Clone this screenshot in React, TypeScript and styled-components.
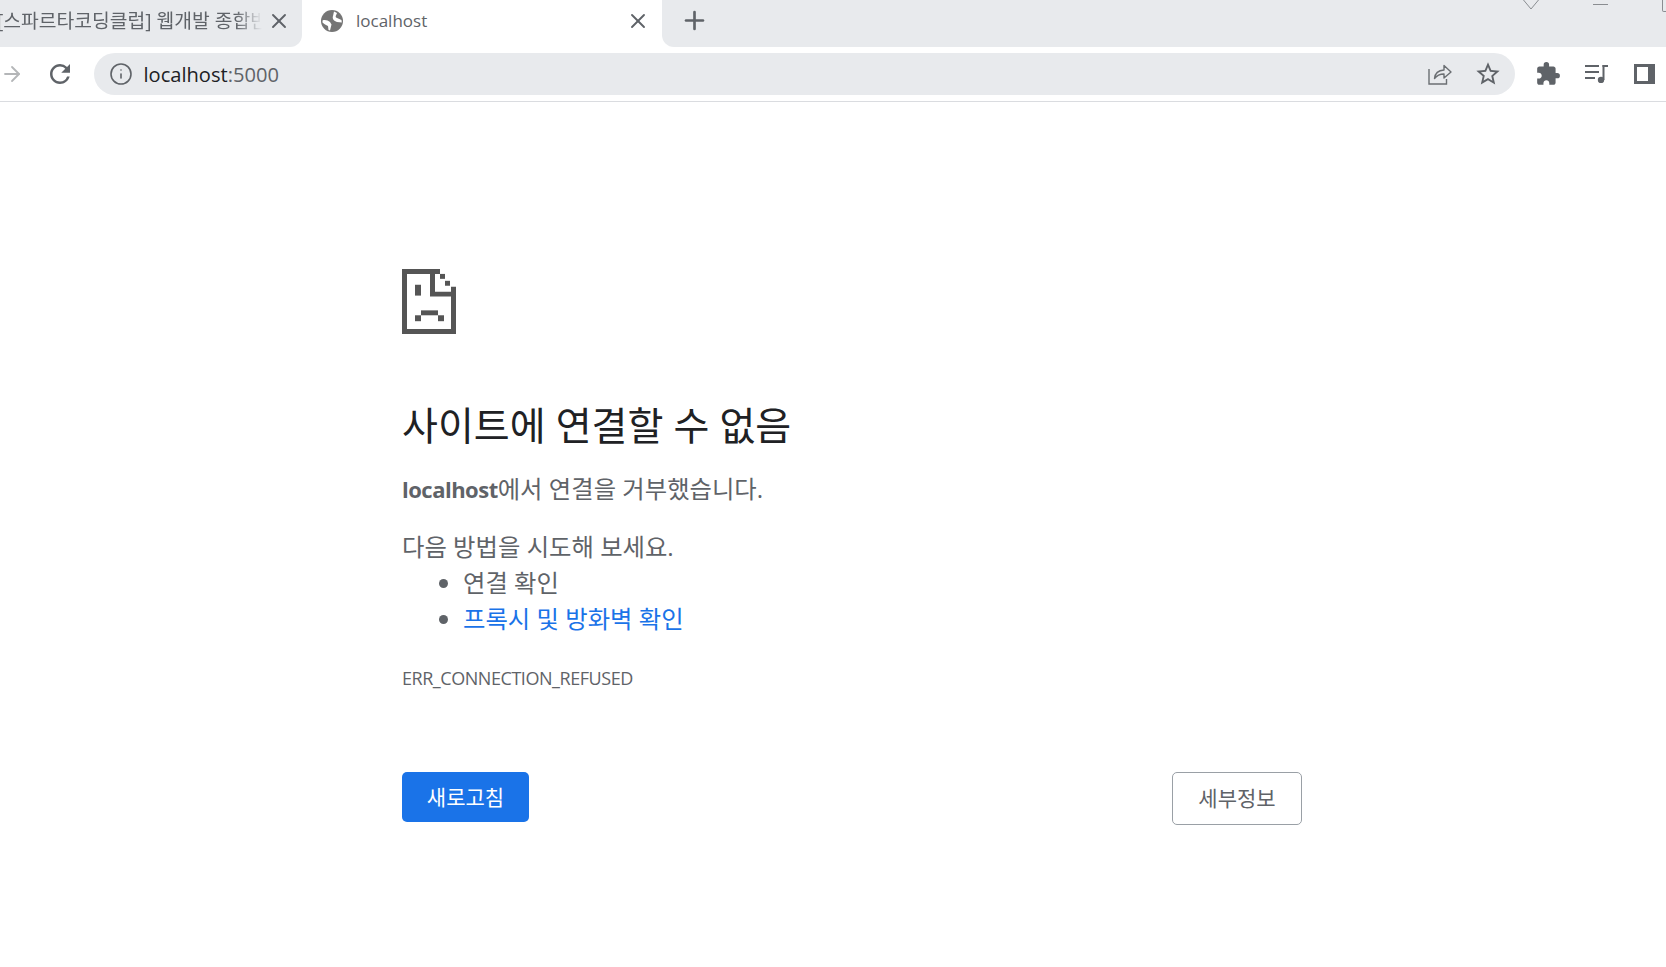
import { FC } from 'react';
import styled, { createGlobalStyle } from 'styled-components';
import { ArrowRight, Info, Plus, X } from 'lucide-react';
import { MdExtension, MdRefresh, MdStarBorder } from 'react-icons/md';

const FONT = '"Open Sans", "Noto Sans CJK KR", sans-serif';

const GlobalStyle = createGlobalStyle`
  html, body {
    margin: 0;
    height: 100%;
    overflow: hidden;
    background: #fff;
    font-family: ${FONT};
  }
`;

const GlobeIcon: FC = () => (
  <svg width="22" height="22" viewBox="0 0 22 22">
    <circle cx="11" cy="11" r="11" fill="#757575" />
    <path
      d="M1.500 10.500C4 9.500 7 10.500 9 12l1.500 2.500L9 20.500 7.500 20 7 16c-2-1-4-2-5.500-3.500zM13 1.500 16 3c-.500 2-2 3-1 4.500l5.500 2.500.300 2.500L16 12c-3-1-5-3-4-6z"
      fill="#fff"
    />
  </svg>
);

const ShareIcon: FC = () => (
  <svg width="24" height="22" viewBox="0 0 24 22" fill="none" stroke="#6b6f73" strokeWidth="1.4">
    <path d="M1 6v15h17.500v-5" />
    <path d="M6.500 15.500c.500-5 4-8.200 9.500-8.500V2.500L23 9l-7 6v-4c-3.500 0-7 1.200-9.500 4.500z" strokeLinejoin="round" />
  </svg>
);

const MediaIcon: FC = () => (
  <svg width="23" height="18" viewBox="0 0 23 18" fill="#5f6368">
    <rect x="0" y="0" width="14" height="2" />
    <rect x="0" y="6" width="14" height="2" />
    <rect x="0" y="12" width="10" height="2" />
    <rect x="17.500" y="0" width="2" height="15" />
    <rect x="17.500" y="0" width="5.500" height="2" />
    <circle cx="16" cy="15" r="3.200" />
  </svg>
);

const PanelIcon: FC = () => (
  <svg width="21" height="20" viewBox="0 0 21 20">
    <rect width="21" height="20" fill="#5f6368" />
    <rect x="3" y="3" width="11" height="14" fill="#fff" />
  </svg>
);

const SadFile: FC = () => (
  <svg width="54" height="65" viewBox="0 0 54 66" preserveAspectRatio="none" fill="#555">
    <path d="M0 0h38v5H33v18h16v-5h5v48H0zM5 5v56h44V28H28V5z" fillRule="evenodd" />
    <rect x="38" y="5" width="5" height="5" />
    <rect x="43" y="12" width="5" height="5" />
    <rect x="13" y="16" width="6" height="11" />
    <rect x="19" y="42" width="17" height="5" />
    <rect x="13" y="47" width="6" height="6" />
    <rect x="36" y="47" width="6" height="6" />
  </svg>
);

const App: FC = () => {
  return (
    <>
      <GlobalStyle />
      <TabStrip>
        <InactiveTab>
          <FadedTitle>[스파르타코딩클럽] 웹개발 종합반</FadedTitle>
          <X size={24} strokeWidth={1.9} color="#5f6368" />
        </InactiveTab>
        <ActiveTab>
          <GlobeIcon />
          <TabTitle>localhost</TabTitle>
          <X size={24} strokeWidth={1.9} color="#5f6368" />
        </ActiveTab>
        <StripFiller>
          <Plus size={29} strokeWidth={2.2} color="#5f6368" />
          <WindowControls>
            <svg width="16" height="10" viewBox="0 0 16 10" fill="none" stroke="#8a8d91">
              <path d="M.5 0 8 9l7.500-9" />
            </svg>
            <MinimizeLine />
            <RestoreBox />
          </WindowControls>
        </StripFiller>
      </TabStrip>

      <Toolbar>
        <IconSlot $width={24}>
          <ArrowRight size={24} strokeWidth={1.8} color="#b4b6b8" />
        </IconSlot>
        <ReloadSlot $width={69.5}>
          <MdRefresh size={30} color="#5f6368" />
        </ReloadSlot>
        <AddressBar>
          <IconSlot $width={24}>
            <Info size={24} strokeWidth={1.6} color="#5f6368" />
          </IconSlot>
          <AddressText>
            localhost<AddressPort>:5000</AddressPort>
          </AddressText>
          <IconSlot $width={48}>
            <ShareIcon />
          </IconSlot>
          <IconSlot $width={47}>
            <MdStarBorder size={28} color="#5f6368" />
          </IconSlot>
        </AddressBar>
        <ExtraIcons>
          <IconSlot $width={48}>
            <MdExtension size={26} color="#5f6368" />
          </IconSlot>
          <IconSlot $width={48}>
            <MediaIcon />
          </IconSlot>
          <IconSlot $width={48}>
            <PanelIcon />
          </IconSlot>
        </ExtraIcons>
      </Toolbar>

      <ErrorPage>
        <SadFile />
        <Heading>사이트에 연결할 수 없음</Heading>
        <Summary>
          <HostName>localhost</HostName>에서 연결을 거부했습니다.
        </Summary>
        <TryText>다음 방법을 시도해 보세요.</TryText>
        <Suggestions>
          <li>연결 확인</li>
          <li>
            <SuggestionLink href="#">프록시 및 방화벽 확인</SuggestionLink>
          </li>
        </Suggestions>
        <ErrorCode>ERR_CONNECTION_REFUSED</ErrorCode>
        <Buttons>
          <ReloadButton>새로고침</ReloadButton>
          <DetailsButton>세부정보</DetailsButton>
        </Buttons>
      </ErrorPage>
    </>
  );
};

const TabStrip = styled.div`
  display: flex;
  height: 47px;
  background: #fff;
`;

const InactiveTab = styled.div`
  width: 302px;
  box-sizing: border-box;
  display: flex;
  align-items: center;
  gap: 5px;
  padding: 0 11px 6px 0;
  background: #e8eaed;
  border-bottom-right-radius: 12px;
`;

const FadedTitle = styled.div`
  flex: 1;
  min-width: 0;
  margin-left: -3px;
  padding-bottom: 2px;
  overflow: hidden;
  white-space: nowrap;
  font-size: 19.3px;
  color: #5f6368;
  mask-image: linear-gradient(to right, #000 90%, transparent 100%);
`;

const ActiveTab = styled.div`
  width: 360px;
  box-sizing: border-box;
  display: flex;
  align-items: center;
  gap: 13px;
  padding: 0 12px 6px 19px;
`;

const TabTitle = styled.div`
  flex: 1;
  font-size: 17px;
  color: #5f6368;
`;

const StripFiller = styled.div`
  flex: 1;
  display: flex;
  align-items: center;
  padding: 0 0 6px 18px;
  background: #e8eaed;
  border-bottom-left-radius: 12px;
`;

const WindowControls = styled.div`
  margin-left: auto;
  margin-right: -8px;
  align-self: flex-start;
  display: flex;
  align-items: flex-start;
  gap: 54px;
`;

const MinimizeLine = styled.div`
  width: 15px;
  height: 1px;
  margin-top: 4px;
  background: #8a8d91;
`;

const RestoreBox = styled.div`
  width: 12px;
  height: 12px;
  box-sizing: border-box;
  border: 1px solid #8a8d91;
  border-top: none;
  border-bottom-left-radius: 2px;
`;

const Toolbar = styled.div`
  display: flex;
  align-items: center;
  height: 55px;
  box-sizing: border-box;
  border-bottom: 1px solid #dadce0;
`;

const IconSlot = styled.div<{ $width: number }>`
  flex: none;
  box-sizing: border-box;
  width: ${(props) => props.$width}px;
  display: flex;
  align-items: center;
  justify-content: center;
`;

const ReloadSlot = styled(IconSlot)`
  padding-left: 2px;
`;

const AddressBar = styled.div`
  width: 1421.5px;
  height: 42px;
  flex: none;
  display: flex;
  align-items: center;
  box-sizing: border-box;
  padding: 0 4px 0 15px;
  background: #e8eaed;
  border-radius: 21px;
`;

const AddressText = styled.div`
  flex: 1;
  margin-left: 11px;
  font-size: 20.1px;
  color: #202124;
`;

const AddressPort = styled.span`
  color: #5f6368;
`;

const ExtraIcons = styled.div`
  display: flex;
  margin-left: 9px;
`;

const ErrorPage = styled.main`
  padding: 167px 0 0 402px;
  width: 900px;
  color: #5f6368;
  font-size: 24.35px;
  line-height: 36px;

  & > svg {
    display: block;
  }
`;

const Heading = styled.h1`
  margin: 67px 0 22px;
  font-size: 39px;
  font-weight: 400;
  line-height: 48px;
  color: #202124;
`;

const Summary = styled.p`
  margin: 0 0 22px;
`;

const HostName = styled.strong`
  font-size: 22px;
  letter-spacing: -0.5px;
`;

const TryText = styled.p`
  margin: 0;
`;

const Suggestions = styled.ul`
  margin: 0;
  padding: 0 0 0 61px;
`;

const SuggestionLink = styled.a`
  color: #1a73e8;
  text-decoration: none;
`;

const ErrorCode = styled.div`
  margin-top: 29px;
  font-size: 18px;
  letter-spacing: -0.45px;
  line-height: 24px;
`;

const Buttons = styled.div`
  display: flex;
  align-items: flex-start;
  justify-content: space-between;
  margin-top: 82px;
`;

const ReloadButton = styled.button`
  width: 127px;
  height: 50px;
  padding: 0 0 2px;
  border: none;
  border-radius: 5px;
  background: #1a73e8;
  color: #fff;
  font-family: ${FONT};
  font-size: 21px;
`;

const DetailsButton = styled.button`
  width: 130px;
  height: 53px;
  padding: 0 0 3px;
  border: 1px solid #9aa0a6;
  border-radius: 5px;
  background: #fff;
  color: #5f6368;
  font-family: ${FONT};
  font-size: 21px;
`;

export default App;
